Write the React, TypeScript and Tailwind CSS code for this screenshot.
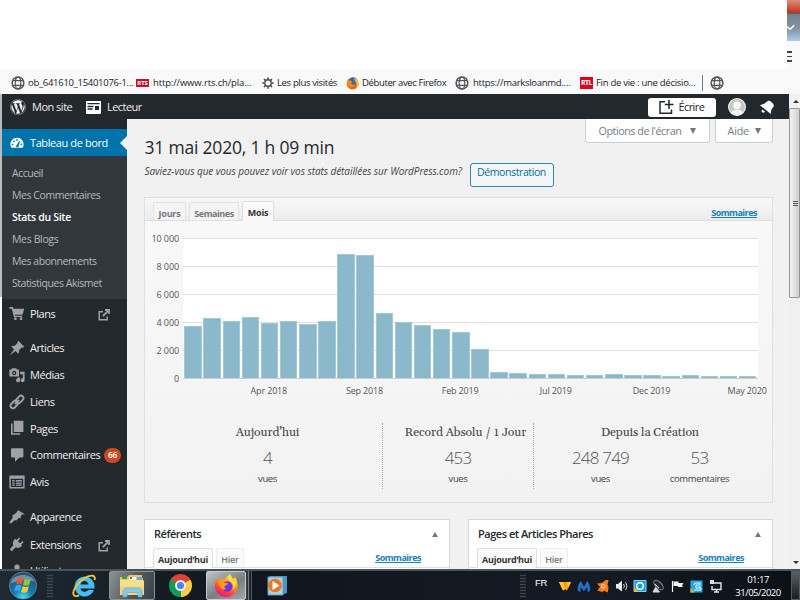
import React from "react";
import { FaWordpress } from "react-icons/fa";

type IconProps = { className?: string };

const Globe = ({ className = "" }: IconProps) => (
  <svg viewBox="0 0 14 14" className={`size-[14px] shrink-0 ${className}`} fill="none" stroke="#55565a" strokeWidth="1.2">
    <circle cx="7" cy="7" r="5.9" strokeWidth="1.5" />
    <ellipse cx="7" cy="7" rx="2.8" ry="5.9" />
    <path d="M1.8 4.6h10.4M1.8 9.4h10.4" />
  </svg>
);

const Gear = () => (
  <svg viewBox="0 0 12 12" className="size-[12px] shrink-0" fill="none" stroke="#4a4a4f">
    <circle cx="6" cy="6" r="3.2" strokeWidth="1.4" />
    <path d="M6 .3v2M6 9.7v2M.3 6h2M9.7 6h2M2 2l1.4 1.4M8.6 8.6L10 10M2 10l1.4-1.4M8.6 3.4L10 2" strokeWidth="1.5" />
  </svg>
);

const Firefox = ({ className = "" }: IconProps) => (
  <svg viewBox="0 0 14 14" className={`shrink-0 ${className}`}>
    <circle cx="7" cy="7.2" r="6.3" fill="#e8601c" />
    <circle cx="7.6" cy="5.2" r="4.9" fill="#2c6da8" />
    <path d="M8.500 1c3.500.8 5.200 3 5.100 6.400-.2 2.600-1.500 4.600-3.600 5.400 1.500-2.500 1.600-4.800.8-6.400C10.200 4.800 9 3.500 8.500 1z" fill="#fbb42c" />
    <path d="M1 4.500C1.500 3 2 2.500 2.400 2.200l.4 1.600c1-.4 2-.3 3 .5l1.400.7-1.800 1.500c.3 2 2.200 2.500 4.800 1-1 3.600-5 4.500-7.600 2.500C1 8.700.6 6.500 1 4.500z" fill="#f28a1d" />
  </svg>
);

const FirefoxNew = () => (
  <svg viewBox="0 0 26 26" className="size-[25px] shrink-0">
    <defs>
      <linearGradient id="ffx" x1=".8" y1="0" x2=".3" y2="1">
        <stop offset="0" stopColor="#fff44f" />
        <stop offset=".4" stopColor="#ff9a1f" />
        <stop offset=".75" stopColor="#ff3b47" />
        <stop offset="1" stopColor="#e31587" />
      </linearGradient>
    </defs>
    <path d="M16 1c2 2 3 3.500 3.500 5L22 4.500c1.500 2 2 4 2.200 6C26 18 20.500 25 13 25 6 25 1 20 1 13.500 1 10 2 7 4.300 4.800l.5 2.500C6 6 7.500 6 9 6.500 11 7 12 5.500 13 4c1-.7 2.200-1.700 3-3z" fill="url(#ffx)" />
    <circle cx="13.800" cy="14" r="5.400" fill="#6f35dd" />
    <path d="M4.500 8.500c3-.8 5.500.2 6.800 1.700l3.700.6c-.6 1.900-3.600 1.500-4.300 3.200.2 1.200 1 2 2.200 2.300-2 1.500-5 .8-6.300-1.500C5.200 13 4.300 11 4.500 8.500z" fill="#ff9a1c" />
    <path d="M15.500 2c-2 4 0 5.500 2.500 7.500 2 1.700 3 4.500 1.300 8 3-2 4.500-6 2.600-10l-2.200 1C19.500 6 17 4 15.500 2z" fill="#ffe03c" />
  </svg>
);

const Gauge = () => (
  <svg viewBox="0 0 16 13" className="h-[12px] w-[14px]">
    <path d="M8 .5a7.500 7.500 0 0 0-6.400 11.400h12.800A7.500 7.500 0 0 0 8 .5z" fill="#fff" />
    <path d="M7 10.500L11 4.200 9.200 11z" fill="#0073aa" stroke="#0073aa" />
    <g fill="#0073aa"><circle cx="3" cy="8" r="1" /><circle cx="4.600" cy="4.600" r="1" /><circle cx="8" cy="3" r="1" /><circle cx="13" cy="8" r="1" /></g>
  </svg>
);

const MenuIcon = ({ name }: { name: string }) => (
  <svg viewBox="0 0 20 20" className="ml-px size-[16px] shrink-0 text-[#9ca2a7]" fill="currentColor">
    {name === "cart" && <path d="M.5 2.500h4.300l.7 2.200H19l-2 7.500H7.400l.3 1.300h8.800V15H6.200L3.500 4.600h-3zM8 15.400a1.800 1.800 0 1 1 0 3.600 1.800 1.800 0 0 1 0-3.600zm7 0a1.800 1.800 0 1 1 0 3.600 1.800 1.800 0 0 1 0-3.600z" />}
    {name === "pin" && <path d="M10.400 3.100l1.200-2.100 7.400 7.400-2.100 1.200-1-.2-3.400 3.500c.3 1.600 0 3.200-.9 4.300L8.300 13.700 1 19 6.300 11.700 2.800 8.200c1.100-.9 2.700-1.200 4.300-.9l3.500-3.400z" />}
    {name === "media" && (
      <>
        <path fillRule="evenodd" d="M.5 3H3L4 1.500h5L10 3h2.500v9H.5zM6.500 4.800a2.700 2.700 0 1 0 0 5.400 2.700 2.700 0 0 0 0-5.400z" />
        <circle cx="6.500" cy="7.500" r="1.200" />
        <path d="M13.800 6H19.500v10.500a2.500 2.500 0 1 1-2.200-2.500V9h-3.500zM10.500 13h3.300v3.500a2.500 2.500 0 1 1-3.300-2.300z" />
      </>
    )}
    {name === "link" && (
      <g fill="none" stroke="currentColor" strokeWidth="2.400">
        <rect x="8.500" y="3.700" width="10.500" height="6.200" rx="3.100" transform="rotate(-45 13.500 7)" />
        <rect x="1.200" y="10" width="10.500" height="6.200" rx="3.100" transform="rotate(-45 6.500 13)" />
        <path d="M7.400 12.600l5.200-5.200" />
      </g>
    )}
    {name === "pages" && <path d="M6 1h12v14H6zM2.500 4.500h2V16.500H14v1.800H2.500z" />}
    {name === "comment" && <path d="M4 1.500h12.500A1.500 1.500 0 0 1 18 3v8.500a1.500 1.500 0 0 1-1.500 1.500H13l-5.500 5.500V13H4a1.500 1.500 0 0 1-1.500-1.500V3A1.500 1.500 0 0 1 4 1.500z" />}
    {name === "form" && <path fillRule="evenodd" d="M.5 2h19v16H.5zm1.800 4v10.200h15.400V6zM4 7.500h3v2H4zm4.500 0H16v2H8.500zM4 10.500h3v1.700H4zm4.500 0H16v1.700H8.500zM4 13.200h3v1.500H4zm4.500 0H16v1.500H8.500z" />}
    {name === "brush" && <path d="M8.500 5.200L11.500 1.500 19.800 6.500l-4.300.7-1.500 5-1.800-1.600-2.300 3.600-2.700-.2L2 18.500.5 16.800l4.100-6-.4-2.600z" />}
    {name === "plug" && <path d="M12.500 2l1.500 1.500-3 3 2.700 2.700 3-3L18.200 7.700l-3 3 1.200 1.200c-2 2.700-5.500 3.700-8 2.200L3.500 19 1 16.500l4.500-4.800C4 9.200 5 5.500 7.800 3.500L9.500 5z" />}
    {name === "user" && <path d="M10 2a3.300 3.300 0 1 1 0 6.600A3.300 3.300 0 0 1 10 2zM3.500 18c0-5 2-8 6.500-8s6.500 3 6.500 8z" />}
  </svg>
);

const External = () => (
  <svg viewBox="0 0 12 12" className="size-[12px]" fill="none" stroke="#9ca2a7" strokeWidth="1.500">
    <path d="M5 2.800H1.200v8h8V7.500" />
    <path d="M7 1h4v4M11 1L4.800 7.200" strokeWidth="1.800" />
  </svg>
);

const Bookmark = ({ icon, label, className }: { icon: React.ReactNode; label: string; className: string }) => (
  <div className={`flex shrink-0 items-center ${className}`}>
    {icon}
    <span className="whitespace-nowrap">{label}</span>
  </div>
);

function BookmarkBar() {
  return (
    <div className="flex h-[25px] items-center bg-[#f9f9fa] pt-[3px] pl-[11px] text-[9.500px] leading-[14px] text-[#222226]">
      <Bookmark className="w-[125px] gap-[3px] tracking-[-0.29px]" icon={<Globe />} label="ob_641610_15401076-1…" />
      <Bookmark
        className="w-[126px] gap-[4px] tracking-[-0.14px]"
        icon={<span className="flex h-[8px] w-[13px] items-center justify-center bg-[#c4122f] text-[6px] font-bold text-white">RTS</span>}
        label="http://www.rts.ch/pla…"
      />
      <Bookmark className="w-[84px] gap-[3px] tracking-[-0.35px]" icon={<Gear />} label="Les plus visités" />
      <Bookmark className="w-[109px] gap-[3px] tracking-[-0.37px]" icon={<Firefox className="size-[13px]" />} label="Débuter avec Firefox" />
      <Bookmark className="w-[125px] gap-[4px] tracking-[-0.28px]" icon={<Globe />} label="https://marksloanmd.…" />
      <Bookmark
        className="w-[122px] gap-[3px] tracking-[-0.28px]"
        icon={<span className="flex h-[12px] w-[13px] items-center justify-center bg-[#e2001a] text-[7px] font-bold tracking-[-0.5px] text-white">RTL</span>}
        label="Fin de vie : une décisio…"
      />
      <div className="mr-[7px] h-[16px] w-px bg-[#77787b]" />
      <Globe />
    </div>
  );
}

function AdminBar() {
  return (
    <div className="flex h-[25px] items-center bg-[#23282d] pt-px pl-[8px] text-[11px] text-[#eeeeee]">
      <FaWordpress className="size-[16px]" />
      <span className="mt-px ml-[6px] w-[54px] whitespace-nowrap tracking-[-0.5px]">Mon site</span>
      <svg viewBox="0 0 15 13" className="h-[13px] w-[15px]">
        <path fill="#fff" d="M0 0h15v12a1 1 0 0 1-1 1H1a1 1 0 0 1-1-1z" />
        <path stroke="#23282d" fill="none" strokeWidth="1.300" d="M1.500 2.700h12M1.500 5.500h6M1.500 8h5" />
        <path fill="#23282d" d="M9 5h4v4H9z" />
      </svg>
      <span className="mt-px ml-[6px] whitespace-nowrap tracking-[-0.55px]">Lecteur</span>
      <div className="ml-auto flex h-[19px] w-[68px] items-center rounded-[3px] bg-white pl-[10.500px] text-[#23282d]">
        <svg viewBox="0 0 15 15" className="mr-[5px] size-[15px]" fill="none" stroke="#23282d" strokeWidth="1.500">
          <path d="M6 1.700H1v11.500h11.500V9.500M10 0v9M5.800 4.500h8.700" />
        </svg>
        <span className="mt-px tracking-[-0.6px]">Écrire</span>
      </div>
      <div className="ml-[12px] size-[18px] overflow-hidden rounded-full bg-[#f1f1f1]">
        <svg viewBox="0 0 17 17" className="size-[18px]">
          <circle cx="8.500" cy="8.500" r="7.500" fill="#c4c6c8" />
          <circle cx="8.500" cy="7" r="3.600" fill="#f6f6f6" />
          <path d="M3 15c0-3 2-4 5.500-4s5.500 1 5.500 4l-5.500 2z" fill="#f6f6f6" />
        </svg>
      </div>
      <svg viewBox="0 0 16 16" className="mr-[15px] ml-[13px] size-[15px]" fill="#fff">
        <path d="M7.500 2.500C9.500.5 11 .3 12.500 1.500l2.300 2.300c1.500 1.700 1.200 3.400-.8 5.200-.9 1.200-1.300 3.500-1.500 6L1 5.500c2.500-.2 4.800-1.400 6.500-3zM3.500 10l2.800 2.300c-.7 1.400-2 1.600-2.900.8s-.9-2.100.1-3.100z" />
      </svg>
    </div>
  );
}

const submenu: [string, string][] = [
  ["Accueil", "tracking-[-0.5px]"],
  ["Mes Commentaires", "tracking-[-0.43px]"],
  ["Stats du Site", "font-semibold text-white tracking-[-0.3px]"],
  ["Mes Blogs", "tracking-[-0.35px]"],
  ["Mes abonnements", "tracking-[-0.45px]"],
  ["Statistiques Akismet", "tracking-[-0.45px]"],
];

const MenuRow = ({ icon, label, external, badge, className = "" }: { icon: string; label: string; external?: boolean; badge?: string; className?: string }) => (
  <div className={`flex h-[26.750px] shrink-0 items-center pl-[6px] text-[11px] text-[#eeeeee] ${className}`}>
    <MenuIcon name={icon} />
    <span className="mt-px ml-[5px] whitespace-nowrap tracking-[-0.44px]">{label}</span>
    {badge && <span className="mt-px mr-[6px] ml-auto flex h-[15px] w-[17px] items-center justify-center rounded-full bg-[#ca4a1f] text-[8.500px] font-semibold tracking-[-0.3px] text-white">{badge}</span>}
    {external && <span className="mt-[4px] mr-[17px] ml-auto"><External /></span>}
  </div>
);

function Sidebar() {
  return (
    <div className="flex w-[125px] shrink-0 flex-col overflow-hidden bg-[#23282d] pt-[10px]">
      <div className="flex h-[27px] shrink-0 items-center bg-[#0073aa] pl-[8px] text-[11px] text-white">
        <Gauge />
        <span className="mt-[2px] ml-[6px] whitespace-nowrap tracking-[-0.4px]">Tableau de bord</span>
        <span className="ml-auto h-0 w-0 border-y-[7px] border-r-[7px] border-y-transparent border-r-[#f1f1f1]" />
      </div>
      <div className="flex h-[143px] shrink-0 flex-col bg-[#32373c] pt-[6px] pl-[10px] text-[10.500px] leading-[22px] text-[#b4b9be]">
        {submenu.map(([label, cls]) => (
          <span key={label} className={`whitespace-nowrap ${cls}`}>{label}</span>
        ))}
      </div>
      <MenuRow icon="cart" label="Plans" external className="mt-px mb-[8px]" />
      <MenuRow icon="pin" label="Articles" />
      <MenuRow icon="media" label="Médias" />
      <MenuRow icon="link" label="Liens" />
      <MenuRow icon="pages" label="Pages" />
      <MenuRow icon="comment" label="Commentaires" badge="66" />
      <MenuRow icon="form" label="Avis" className="mb-[8.500px]" />
      <MenuRow icon="brush" label="Apparence" />
      <MenuRow icon="plug" label="Extensions" external className="mt-[0.500px]" />
      <MenuRow icon="user" label="Utilisateurs" />
    </div>
  );
}

const bars = [51.6, 59.6, 57.3, 61.3, 54.6, 57.3, 54, 57.3, 124.3, 123.3, 65.3, 56.3, 53, 48.6, 46, 29, 6.3, 5.3, 4.3, 4, 3.3, 3.3, 4.3, 3.3, 3.3, 2.3, 3.3, 2.3, 2.3, 2];
const ticks = ["10 000", "8 000", "6 000", "4 000", "2 000", "0"];
const months = ["Apr 2018", "Sep 2018", "Feb 2019", "Jul 2019", "Dec 2019", "May 2020"];

function Chart() {
  return (
    <div className="h-[182px]">
      <div className="flex pt-[17px]">
        <div className="mt-[-7px] flex h-[155px] w-[38px] shrink-0 flex-col pr-[4px] text-right text-[9px] tracking-[-0.1px] text-[#555]">
          {ticks.map((t) => (
            <span key={t} className="h-[28px] shrink-0 leading-[16px]">{t}</span>
          ))}
        </div>
        <div className="grid h-[141px] w-[575px]">
          <div className="col-start-1 row-start-1 flex flex-col bg-white">
            {ticks.slice(1).map((t) => (
              <div key={t} className="h-[28px] border-t border-[#dfdfdf]" />
            ))}
          </div>
          <div className="col-start-1 row-start-1 flex items-end border-b border-[#c8ccd4] pl-[0.500px]">
            {bars.map((h, i) => (
              <div key={i} className="flex w-[19.140px] shrink-0 justify-center">
                <div className="w-[17.500px] border-x border-t border-[#a3c8d8] bg-[#8cb8cc]" style={{ height: h }} />
              </div>
            ))}
          </div>
        </div>
      </div>
      <div className="mt-[-2px] flex pl-[76px] text-[9px] leading-[14px] text-[#555]">
        {months.map((m) => (
          <span key={m} className="w-[95.660px] shrink-0 text-center tracking-[-0.15px] whitespace-nowrap">{m}</span>
        ))}
      </div>
    </div>
  );
}

const Figure = ({ value, unit, className }: { value: string; unit: string; className: string }) => (
  <div className={`flex flex-col items-center whitespace-nowrap ${className}`}>
    <span className="text-[17px] leading-[24px] font-light tracking-[-0.8px] text-[#555]">{value}</span>
    <span className="mt-[2px] text-[9.500px] leading-[14px] tracking-[-0.38px] text-[#444]">{unit}</span>
  </div>
);

const StatTitle = ({ children, className }: { children: string; className: string }) => (
  <div className={`mb-[5px] h-[18px] text-center font-[Gelasio,Georgia,'Liberation_Serif',serif] text-[12.200px] leading-[20px] tracking-[-0.1px] whitespace-nowrap text-[#464646] ${className}`}>{children}</div>
);

function StatsPanel() {
  return (
    <section className="h-[306px] w-[629px] border border-[#dfdfdf] bg-[linear-gradient(#f9f9f9,#f2f2f2)]">
      <div className="flex h-[23px] items-end border-b border-[#dfdfdf] bg-[linear-gradient(#f8f8f8,#ececec)] pl-[8px] text-[9px] font-bold text-[#777]">
        <div className="mr-[3px] flex h-[18px] w-[33px] items-center justify-center rounded-t-[2px] border border-b-0 border-[#e3e3e3] bg-[#f4f4f4] pt-[4px] tracking-[-0.2px]">Jours</div>
        <div className="mr-[3px] flex h-[18px] w-[50px] items-center justify-center rounded-t-[2px] border border-b-0 border-[#e3e3e3] bg-[#f4f4f4] pt-[4px] tracking-[-0.45px]">Semaines</div>
        <div className="mb-[-1px] flex h-[20px] w-[32px] items-center justify-center rounded-t-[2px] border border-b-0 border-[#dfdfdf] bg-[#f9f9f9] pt-[3px] tracking-[-0.2px] text-[#333]">Mois</div>
        <a className="mr-[15px] mb-[1px] ml-auto leading-[13px] tracking-[-0.5px] text-[#1682b6] underline">Sommaires</a>
      </div>
      <Chart />
      <div className="mt-[20px] flex">
        <div className="flex h-[66px] w-[238px] flex-col border-r border-dotted border-[#aaa]">
          <StatTitle className="pl-[8px]">Aujourd’hui</StatTitle>
          <Figure value="4" unit="vues" className="pl-[8px]" />
        </div>
        <div className="flex h-[66px] w-[151px] flex-col border-r border-dotted border-[#aaa]">
          <StatTitle className="pl-[15px]">Record Absolu / 1 Jour</StatTitle>
          <Figure value="453" unit="vues" className="" />
        </div>
        <div className="flex h-[66px] w-[230px] flex-col">
          <StatTitle className="pl-[2px]">Depuis la Création</StatTitle>
          <div className="flex pl-[17px]">
            <Figure value="248 749" unit="vues" className="w-[99px]" />
            <Figure value="53" unit="commentaires" className="w-[99px]" />
          </div>
        </div>
      </div>
    </section>
  );
}

const Box = ({ title, className }: { title: string; className: string }) => (
  <section className={`h-[60px] border border-[#d8d8d8] bg-white ${className}`}>
    <div className="flex h-[28px] items-center justify-between pt-[1px] pr-[11px] pl-[9px] text-[11px] font-semibold tracking-[-0.48px] text-[#23282d]">
      {title}
      <span className="h-0 w-0 border-x-[3.500px] border-b-[5px] border-x-transparent border-b-[#72777c]" />
    </div>
    <div className="flex h-[20px] items-end border-b border-[#dfdfdf] pl-[8px] text-[9px] font-bold">
      <div className="mr-[3px] mb-[-1px] flex h-[20px] w-[60px] items-center justify-center rounded-t-[2px] border border-b-0 border-[#dfdfdf] bg-[#fbfbfb] pt-[2px] tracking-[-0.25px] text-[#333]">Aujourd’hui</div>
      <div className="flex h-[19px] w-[28px] items-center justify-center rounded-t-[2px] border border-b-0 border-[#eee] bg-[#fbfbfb] pt-[3px] font-semibold tracking-[-0.2px] text-[#777]">Hier</div>
      <a className="mr-[28px] mb-[3px] ml-auto leading-[13px] tracking-[-0.5px] text-[#1682b6] underline">Sommaires</a>
    </div>
  </section>
);

function Content() {
  return (
    <main className="flex h-full w-[662px] flex-col overflow-hidden bg-[#f1f1f1] pl-[17.500px]">
      <div className="flex">
        <h1 className="mt-[15px] w-[440px] text-[17.500px] leading-[26px] tracking-[-0.2px] whitespace-nowrap text-[#23282d]">31 mai 2020, 1 h 09 min</h1>
        <div className="flex gap-[5px] text-[10.800px] text-[#777c82]">
          <div className="flex h-[24px] w-[125px] items-center gap-[9px] rounded-b-[3px] border border-t-0 border-[#ccd0d4] bg-white pt-px pl-[13px] tracking-[-0.48px] whitespace-nowrap">
            Options de l'écran
            <span className="h-0 w-0 border-x-[3.500px] border-t-[6px] border-x-transparent border-t-[#72777c]" />
          </div>
          <div className="flex h-[24px] w-[58px] items-center gap-[6px] rounded-b-[3px] border border-t-0 border-[#ccd0d4] bg-white pt-px pl-[12px] tracking-[-0.2px] whitespace-nowrap">
            Aide
            <span className="h-0 w-0 border-x-[3.500px] border-t-[6px] border-x-transparent border-t-[#72777c]" />
          </div>
        </div>
      </div>
      <div className="mt-[3px] flex h-[24px] shrink-0">
        <p className="w-[325px] text-[10px] leading-[17px] tracking-[-0.07px] whitespace-nowrap text-[#444] italic">Saviez-vous que vous pouvez voir vos stats détaillées sur WordPress.com?</p>
        <button className="h-[24px] w-[84px] rounded-[3px] border border-[#2b88b0] bg-[#f3f5f6] pb-[4px] text-[10.500px] tracking-[-0.4px] text-[#0071a1]">Démonstration</button>
      </div>
      <div className="mt-[10px] ml-[-0.500px]"><StatsPanel /></div>
      <div className="mt-[16px] ml-[-0.500px] flex gap-[18px]">
        <Box title="Référents" className="w-[306px]" />
        <Box title="Pages et Articles Phares" className="w-[305px]" />
      </div>
    </main>
  );
}

function Scrollbar() {
  return (
    <div className="flex w-[11px] shrink-0 flex-col items-center bg-[#f0f0f0]">
      <div className="flex h-[14px] items-center pl-[2px]"><span className="h-0 w-0 border-x-[3px] border-b-[3px] border-x-transparent border-b-[#333]" /></div>
      <div className="flex h-[190px] w-full flex-col items-end justify-center gap-px rounded-[1px] border border-[#979797] bg-[linear-gradient(90deg,#f4f4f4,#cfcfcf)] pr-[1px]">
        <span className="h-px w-[5px] bg-[#555]" />
        <span className="h-px w-[5px] bg-[#555]" />
        <span className="h-px w-[5px] bg-[#555]" />
      </div>
      <div className="mt-auto flex h-[14px] items-center pl-[2px]"><span className="h-0 w-0 border-x-[3px] border-t-[3px] border-x-transparent border-t-[#333]" /></div>
    </div>
  );
}

const Grip = ({ className }: IconProps) => (
  <div className={`h-[24px] w-[6px] shrink-0 bg-[radial-gradient(#4a5258_0.4px,transparent_0.9px)] bg-[size:2px_3px] ${className}`} />
);

const Explorer = () => (
  <svg viewBox="0 0 26 24" className="h-[24px] w-[26px]">
    <path d="M1 3h7l2-2h13v3h1v17H1z" fill="#e9c767" />
    <path d="M3 2h5v3H3z" fill="#45a045" /><path d="M10 3h7v4h-7z" fill="#f7f7f2" /><path d="M11 3h2v2h-2z" fill="#d94f37" /><path d="M18 3h5v3h-5z" fill="#5aa6dd" />
    <path d="M1 6h23l1 1v14H1z" fill="#f6e08f" />
    <path d="M1 12h24v9H1z" fill="#eccf6d" opacity=".6" />
    <path d="M4 23v-6.500L6.500 14h14l2.500 2.500V23h-4v-4.500H8V23z" fill="#87c9ea" stroke="#5aa3cf" strokeWidth=".6" />
  </svg>
);

const Taskbar = () => (
  <footer className="flex h-[31px] shrink-0 items-center border-t-2 border-[#4a5359] bg-[linear-gradient(90deg,#1e2931,#10161d_30%,#141b24_75%,#0b1016)]">
    <svg viewBox="0 0 30 30" className="ml-[8px] h-[29px] w-[30px] shrink-0">
      <defs>
        <radialGradient id="orb" cx=".5" cy=".95" r=".9">
          <stop offset="0" stopColor="#3ee4ff" /><stop offset=".4" stopColor="#1179b4" /><stop offset="1" stopColor="#2c4d67" />
        </radialGradient>
      </defs>
      <circle cx="15" cy="15" r="14" fill="url(#orb)" stroke="#71909f" strokeWidth=".8" />
      <path d="M3 11C6 2 24 2 27 11 20 9 10 9 3 13z" fill="#b8ccd6" opacity=".5" />
      <path d="M9.500 7.500c2-1 4-1 5.800.2l-1.500 6c-1.800-1.200-3.800-1-5.800-.2z" fill="#ee5a2b" />
      <path d="M16.500 8.200c2 1 4 1 6.500 0l-1.700 6.300c-2.200 1-4.300 1-6.300-.1z" fill="#8ec63f" />
      <path d="M7.600 14.800c2-.9 4-.9 5.800.2l-1.500 6c-1.800-1.200-3.800-1-5.900-.2z" fill="#3aa5e8" />
      <path d="M14.700 15.700c2 1 4 1 6.300 0l-1.700 6c-2.200 1-4.300 1-6.200-.1z" fill="#fcc92c" />
    </svg>
    <Grip className="ml-[9px]" />
    <svg viewBox="0 0 24 24" className="ml-[19px] size-[24px] shrink-0">
      <path fillRule="evenodd" d="M12.500 2.500a10 10 0 0 1 10 10.500v1.500H8.500c.3 2 1.800 3.300 4 3.300 1.500 0 2.700-.6 3.500-1.800h6A10 10 0 1 1 12.500 2.500zm0 4.500c-2 0-3.600 1.400-4 3.500h8c-.4-2.100-2-3.500-4-3.500z" fill="#45bdf0" />
      <path d="M22.500 6C24 1 19 0 12 4.500 4 10 .5 17 1.500 20.500c.6 2 3 2 5.500.8" fill="none" stroke="#f5c430" strokeWidth="1.900" />
    </svg>
    <div className="ml-[13px] flex h-[29px] w-[46px] shrink-0 items-center justify-center rounded-[2px] border border-[#8b9295] bg-[linear-gradient(115deg,#8d9496,#50585d_55%,#3a4247)]"><Explorer /></div>
    <div className="ml-[14px] flex size-[23px] shrink-0 items-center justify-center overflow-hidden rounded-full bg-[conic-gradient(from_-60deg,#db4437_0_120deg,#ffcd40_120deg_240deg,#0f9d58_240deg_360deg)]">
      <span className="size-[11px] rounded-full border-2 border-[#e8eef0] bg-[#4285f4]" />
    </div>
    <div className="ml-[14px] flex h-[29px] w-[40px] shrink-0 items-center justify-center rounded-[2px] border border-[#c7cbcd] bg-[linear-gradient(150deg,#c3c6c8,#797e81_55%,#a4a6a7)]"><FirefoxNew /></div>
    <div className="h-[29px] w-[3px] border-r border-[#73797c] bg-[#30373c]" />
    <div className="h-[29px] w-[3px] border-r border-[#4d555a] bg-[#20272c]" />
    <svg viewBox="0 0 21 20" className="ml-[14px] h-[20px] w-[21px] shrink-0">
      <path d="M4 0h17v17l-3 1H4z" fill="#4f93bd" /><path d="M2 1h15v18H2z" fill="#a5d2e9" stroke="#5b9dc3" />
      <circle cx="9" cy="9.500" r="6.800" fill="#ee7420" /><path d="M6.500 5v9l7-4.500z" fill="#fff" />
    </svg>
    <div className="ml-auto flex shrink-0 items-center">
      <Grip className="mr-[9px]" />
      <span className="mb-[5px] w-[24px] font-['Liberation_Sans',sans-serif] text-[9.500px] tracking-[-0.4px] text-white">FR</span>
      <svg viewBox="0 0 163 14" className="mr-[4px] h-[14px] w-[163px]">
        <path d="M0 3h12l-4 8.500-2-1.500-2 1.500z" fill="#ff9d19" /><path d="M0 3h4l2 7-2 1.500zM8 3h4L9 9z" fill="#ffcb22" />
        <path d="M19 12C18 8 20 4 22 2l3 6 3-6c2 2 4 6 3 10l-2.500 1V8L25 12l-3.500-4v5z" fill="#2470c7" />
        <path d="M38 4.500l4.500-.6L47 1h2.500l-1 4.500 1 2.500-.7 5.500-3.500-1.800-2 1.300-5-1.500L41 8z" fill="#ff7a1c" /><circle cx="44.200" cy="7.300" r="2.200" fill="#ffd0a0" /><circle cx="44.200" cy="7.300" r="1" fill="#f36a0c" />
        <path d="M57 5h2l4-3.500v11L59 9.500h-2z" fill="#e9eaeb" /><path d="M64.500 5c1 1.300 1 3 0 4.300M66.300 3.300c2 2.200 2 5.500 0 7.700" stroke="#e9eaeb" fill="none" />
        <path d="M75 1.500h12v11H75z" fill="#159de5" stroke="#8bd3f5" /><path d="M75 8v4.500h5z" fill="#f0b324" /><circle cx="81" cy="7" r="3.300" fill="none" stroke="#fff" strokeWidth="1.500" />
        <ellipse cx="99.500" cy="6" rx="6" ry="3" transform="rotate(45 99.500 6)" fill="#24282c" stroke="#8b9094" /><path d="M94 13l2.500-4.500 4 4.500zM96 5l4 4" stroke="#ddd" fill="#d3d3d3" />
        <path d="M113.500 2v11" stroke="#fff" strokeWidth="1.200" /><path d="M114.500 2.500h5V4h5l-1.500 2.500 1 1.500h-5V7h-4.500z" fill="#f3f3f3" />
        <path d="M131.500 1.500h12v12h-12z" fill="#28a9e6" /><path d="M131.500 9l4 4.500h-4z" fill="#f0b324" /><path d="M135 6l1-2h5v2h-4v3h5v2h-7M139 8h3" stroke="#e2f6ff" fill="none" />
        <path d="M154 4h8v6.500h-9V7M155 13h5M157.500 11v2" stroke="#e6e6e6" fill="none" strokeWidth="1.400" /><path d="M151 1h4v4h-4z" fill="#ddd" />
      </svg>
      <div className="flex w-[60px] flex-col items-center pl-[4px] text-[9.500px] leading-[13px] tracking-[-0.5px] text-white"><span>01:17</span><span>31/05/2020</span></div>
      <div className="ml-[5px] h-[29px] w-[9px] border border-[#555c61] bg-[linear-gradient(#596066,#171d22)]" />
    </div>
  </footer>
);

export default function App() {
  return (
    <div className="flex h-[600px] w-[800px] flex-col overflow-hidden bg-white font-['Open_Sans','Noto_Sans',sans-serif]">
      <div className="flex h-[69px] shrink-0 justify-end">
        <div className="flex w-[13px] flex-col bg-[#f9f9fa]">
          <div className="h-[14px] border-b-2 border-[#7e5249] bg-[linear-gradient(#df8c78,#bf3a20)]" />
          <div className="flex h-[27px] items-center bg-[linear-gradient(#77808a,#8493a2_55%,#abccec)]">
            <svg viewBox="0 0 10 10" className="size-[9px]" fill="none" stroke="#fff" strokeWidth="1.600"><path d="M0 4l3.500 3L8 2.500" /></svg>
          </div>
          <div className="mt-[10px] flex flex-col gap-[3px]"><span className="h-[1.500px] w-[5px] bg-[#444]" /><span className="h-[1.500px] w-[5px] bg-[#444]" /><span className="h-[1.500px] w-[5px] bg-[#444]" /></div>
        </div>
      </div>
      <BookmarkBar />
      <div className="flex h-[475px] shrink-0">
        <div className="h-[203px] w-[2px] shrink-0 bg-[#b9bbbc]" />
        <div className="flex w-[787px] shrink-0 flex-col">
          <AdminBar />
          <div className="flex h-[450px]">
            <Sidebar />
            <Content />
          </div>
        </div>
        <Scrollbar />
      </div>
      <Taskbar />
    </div>
  );
}
